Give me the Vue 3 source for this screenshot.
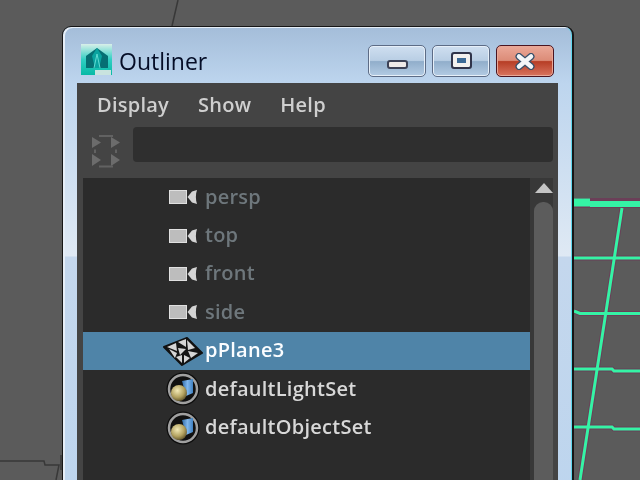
<script setup>
const menus = ['Display', 'Show', 'Help']
const rows = [
  { name: 'persp', kind: 'camera' },
  { name: 'top', kind: 'camera' },
  { name: 'front', kind: 'camera' },
  { name: 'side', kind: 'camera' },
  { name: 'pPlane3', kind: 'plane' },
  { name: 'defaultLightSet', kind: 'set' },
  { name: 'defaultObjectSet', kind: 'set' },
]
const meshY = ['M574 258H640', 'M574 311L580 313.500H640', 'M574 369H612L614 371H640', 'M574 427H612L614 429H640']
</script>

<template>
  <div class="desktop">
    <svg class="scene" width="640" height="480" viewBox="0 0 640 480">
      <g fill="none" stroke="#383838" stroke-width="1.500">
        <path d="M178 0L172 26" />
        <path d="M0 461H44L45 465H59L56 480" />
        <path d="M61 455V470" />
      </g>
      <g fill="none" stroke="#6b3f58" stroke-width="5">
        <path d="M622 208L580 480" />
        <path v-for="d in meshY" :key="'o' + d" :d="d" />
        <path d="M574 203H640" stroke-width="10" />
      </g>
      <g fill="none" stroke="#35f3a5" stroke-width="3">
        <path d="M622 208L580 480" />
        <path v-for="d in meshY" :key="d" :d="d" />
        <path d="M574 202.500H590" stroke-width="8" />
        <path d="M590 204H640" stroke-width="6" />
      </g>
    </svg>

    <section class="window">
      <header class="titlebar">
        <svg class="app-icon" width="32" height="32" viewBox="0 0 32 32">
          <defs>
            <linearGradient id="appbg" x1="0" y1="0" x2="0" y2="1">
              <stop offset="0" stop-color="#d8efe9" />
              <stop offset="0.500" stop-color="#30cfc3" />
              <stop offset="1" stop-color="#08b9a5" />
            </linearGradient>
          </defs>
          <rect width="31" height="31" fill="url(#appbg)" />
          <path d="M16 4L27 12V24H5V12Z" fill="#066f73" />
          <path d="M16 4L11 12L14 24H18L21 12Z" fill="#0aa39f" />
          <path d="M16 10L13 24M16 10L19 24" stroke="#5fdcd3" stroke-width="1" fill="none" />
          <rect x="14" y="26" width="16" height="5" fill="#c9e3df" />
        </svg>
        <h1 class="title">Outliner</h1>
        <div class="controls">
          <button class="ctrl">
            <span class="glyph-min"></span>
          </button>
          <button class="ctrl">
            <span class="glyph-max"></span>
          </button>
          <button class="ctrl close">
            <svg width="22" height="17" viewBox="0 0 22 17">
              <path d="M5 3.500L17 13.500M17 3.500L5 13.500" stroke="#37506a" stroke-width="7" stroke-linecap="round" />
              <path d="M5 3.500L17 13.500M17 3.500L5 13.500" stroke="#f4f6f8" stroke-width="4.500" stroke-linecap="round" />
            </svg>
          </button>
        </div>
      </header>

      <div class="panel">
        <nav class="menubar">
          <span v-for="m in menus" :key="m" class="menu">{{ m }}</span>
        </nav>
        <div class="toolbar">
          <svg class="tool-icon" width="30" height="34" viewBox="0 0 30 34">
            <g fill="#6c6c6c">
              <path d="M1 3L10 8.500L1 14Z" />
              <path d="M20 3L29 8.500L20 14Z" />
              <path d="M1 20L10 26L1 32Z" />
              <path d="M20 20L29 26L20 32Z" />
            </g>
            <path d="M8 2H22M8 32.500H22M4 15.500V19M25 15.500V19" stroke="#626262" stroke-width="2" fill="none" />
          </svg>
          <div class="search"></div>
        </div>
        <div class="content">
          <ul class="list">
            <li v-for="r in rows" :key="r.name" class="row" :class="{ selected: r.kind === 'plane', ghost: r.kind === 'camera' }">
              <span class="icon-slot">
                <svg v-if="r.kind === 'camera'" class="cam" width="30" height="16" viewBox="0 0 30 16">
                  <rect x="1.500" y="1.500" width="17" height="13" fill="#bdbdbd" stroke="#e0e0e0" />
                  <path d="M19.500 8L24 2.500L29 1C27.500 5 27.500 11 29 15L24 13.500Z" fill="#d4d4d4" />
                </svg>
                <svg v-else-if="r.kind === 'plane'" class="plane" width="42" height="30" viewBox="0 0 42 30">
                  <path d="M2 11L25 2L40 17L20 29Z" fill="#151515" stroke="#111" stroke-width="2" stroke-linejoin="round" />
                  <g fill="#d6d6d6">
                    <path d="M5 11L14 7L15 15Z" />
                    <path d="M16 6L24 3L24 11Z" />
                    <path d="M25 4L33 12L26 14Z" />
                    <path d="M7 13L15 17L13 22Z" />
                    <path d="M16 12L24 13L18 19Z" />
                    <path d="M26 15L36 17L29 22Z" />
                    <path d="M14 21L20 19L20 27Z" />
                    <path d="M22 19L28 22L22 27Z" />
                  </g>
                </svg>
                <svg v-else class="set" width="34" height="34" viewBox="0 0 34 34">
                  <defs>
                    <radialGradient id="ball" cx="0.400" cy="0.350" r="0.700">
                      <stop offset="0" stop-color="#f2e9b6" />
                      <stop offset="0.600" stop-color="#b3a260" />
                      <stop offset="1" stop-color="#5c5028" />
                    </radialGradient>
                    <linearGradient id="cyl" x1="0" y1="0" x2="1" y2="0">
                      <stop offset="0" stop-color="#2f6ba8" />
                      <stop offset="0.500" stop-color="#7fb6ec" />
                      <stop offset="1" stop-color="#3f80c0" />
                    </linearGradient>
                  </defs>
                  <circle cx="17" cy="17" r="16.500" fill="#0c0c0c" />
                  <circle cx="17" cy="17" r="14" fill="#111" stroke="#a0a0a0" stroke-width="2.500" />
                  <path d="M16 9L27 7V21L20 24Z" fill="url(#cyl)" />
                  <circle cx="13" cy="21" r="8" fill="url(#ball)" />
                </svg>
              </span>
              <span class="label">{{ r.name }}</span>
            </li>
          </ul>
          <aside class="scrollbar">
            <span class="arrow"></span>
            <span class="thumb"></span>
          </aside>
        </div>
      </div>
    </section>
  </div>
</template>

<style>
html, body { margin: 0; background: #5a5a5a; overflow: hidden; }
</style>

<style scoped>
.desktop {
  position: relative;
  width: 640px;
  height: 480px;
  overflow: hidden;
  background: #5b5b5b;
}
.scene { position: absolute; inset: 0; }
.window {
  position: absolute;
  left: 62px;
  top: 26px;
  width: 512px;
  height: 480px;
  box-sizing: border-box;
  border: 1.500px solid #161616;
  border-right-width: 2px;
  border-radius: 9px 9px 0 0;
  padding: 0 14px 0 14px;
  display: flex;
  flex-direction: column;
  background: linear-gradient(#a4bdd9 0, #bdd5ee 56px, #dfe9f4 229px, #c4d7ed 230px, #bdd5ee 100%);
  box-shadow: inset 2px 1px 0 #e6eef7, inset -1px 0 0 #5fd7ee;
}
.titlebar {
  height: 56px;
  flex: none;
  display: flex;
  align-items: flex-start;
  margin-left: 4px;
}
.app-icon { margin-top: 17px; flex: none; }
.title {
  margin: 17px 0 0 6px;
  font: 400 23px/34px "Open Sans", sans-serif;
  color: #050d26;
  filter: blur(0.3px);
}
.controls {
  margin-left: auto;
  margin-right: 4px;
  margin-top: 18px;
  display: flex;
  gap: 6px;
}
.ctrl {
  width: 58px;
  height: 32px;
  box-sizing: border-box;
  padding: 0;
  border: 1.500px solid #5d6c86;
  border-radius: 5px;
  display: flex;
  align-items: flex-end;
  justify-content: center;
  background: linear-gradient(#cfdff0 0, #b9cee4 48%, #91aecb 52%, #b3cbe3 100%);
  box-shadow: inset 0 0 0 1px #e6eff8;
}
.ctrl.close {
  border-color: #4b1420;
  background: linear-gradient(#eba898 0, #dc8c78 48%, #b73e26 52%, #d8745f 100%);
  box-shadow: inset 0 0 0 1px #e8a898;
  align-items: center;
}
.glyph-min {
  width: 21px;
  height: 9px;
  box-sizing: border-box;
  margin-bottom: 7px;
  background: #efeae8;
  border: 2px solid #3d4256;
  border-radius: 3px;
}
.glyph-max {
  width: 21px;
  height: 17px;
  box-sizing: border-box;
  margin-bottom: 7px;
  background: #3c6a96;
  border: 2px solid #30344a;
  border-radius: 3px;
  box-shadow: inset 0 0 0 4px #f2f0ee;
}
.panel {
  flex: 1;
  background: #444;
  display: flex;
  flex-direction: column;
  padding-left: 6px;
}
.menubar {
  height: 44px;
  flex: none;
  display: flex;
  align-items: center;
  gap: 29px;
  padding-left: 14px;
}
.menu {
  font: 600 20px/1 "Open Sans", sans-serif;
  letter-spacing: 0.25px;
  color: #cfcfcf;
  filter: blur(0.4px);
}
.toolbar {
  height: 51px;
  flex: none;
  display: flex;
  align-items: flex-start;
  padding-right: 5px;
}
.tool-icon { margin: 7px 12px 0 8px; flex: none; }
.search {
  flex: 1;
  height: 35px;
  background: #2f2f2f;
  border-radius: 4px;
}
.content {
  flex: 1;
  display: flex;
  padding-right: 5px;
}
.list {
  flex: 1;
  margin: 0;
  padding: 0;
  list-style: none;
  background: #2b2b2b;
}
.row {
  height: 38.4px;
  display: flex;
  align-items: center;
  position: relative;
  color: #d8d8d8;
  font: 600 20px/1 "Open Sans", sans-serif;
  letter-spacing: 0.25px;
}
.row.ghost { color: #6e777c; }
.row.selected { background: #4f84a8; color: #fbfdff; }
.icon-slot {
  width: 122px;
  flex: none;
  display: flex;
  justify-content: flex-end;
}
.icon-slot svg { display: block; }
.icon-slot .cam { margin-right: 7px; }
.icon-slot .plane { margin-right: 1px; }
.icon-slot .set { margin-right: 5px; }
.label { filter: blur(0.4px); margin-top: -1px; }
.scrollbar {
  width: 23px;
  flex: none;
  background: #383838;
  display: flex;
  flex-direction: column;
  align-items: flex-end;
  padding-top: 5px;
  box-sizing: border-box;
}
.arrow {
  width: 0;
  height: 0;
  border-left: 9.500px solid transparent;
  border-right: 9.500px solid transparent;
  border-bottom: 10px solid #c4c4c4;
}
.thumb {
  margin-top: 9px;
  width: 19px;
  flex: 1;
  background: #5c5c5c;
  border-radius: 9px 9px 0 0;
}
</style>
